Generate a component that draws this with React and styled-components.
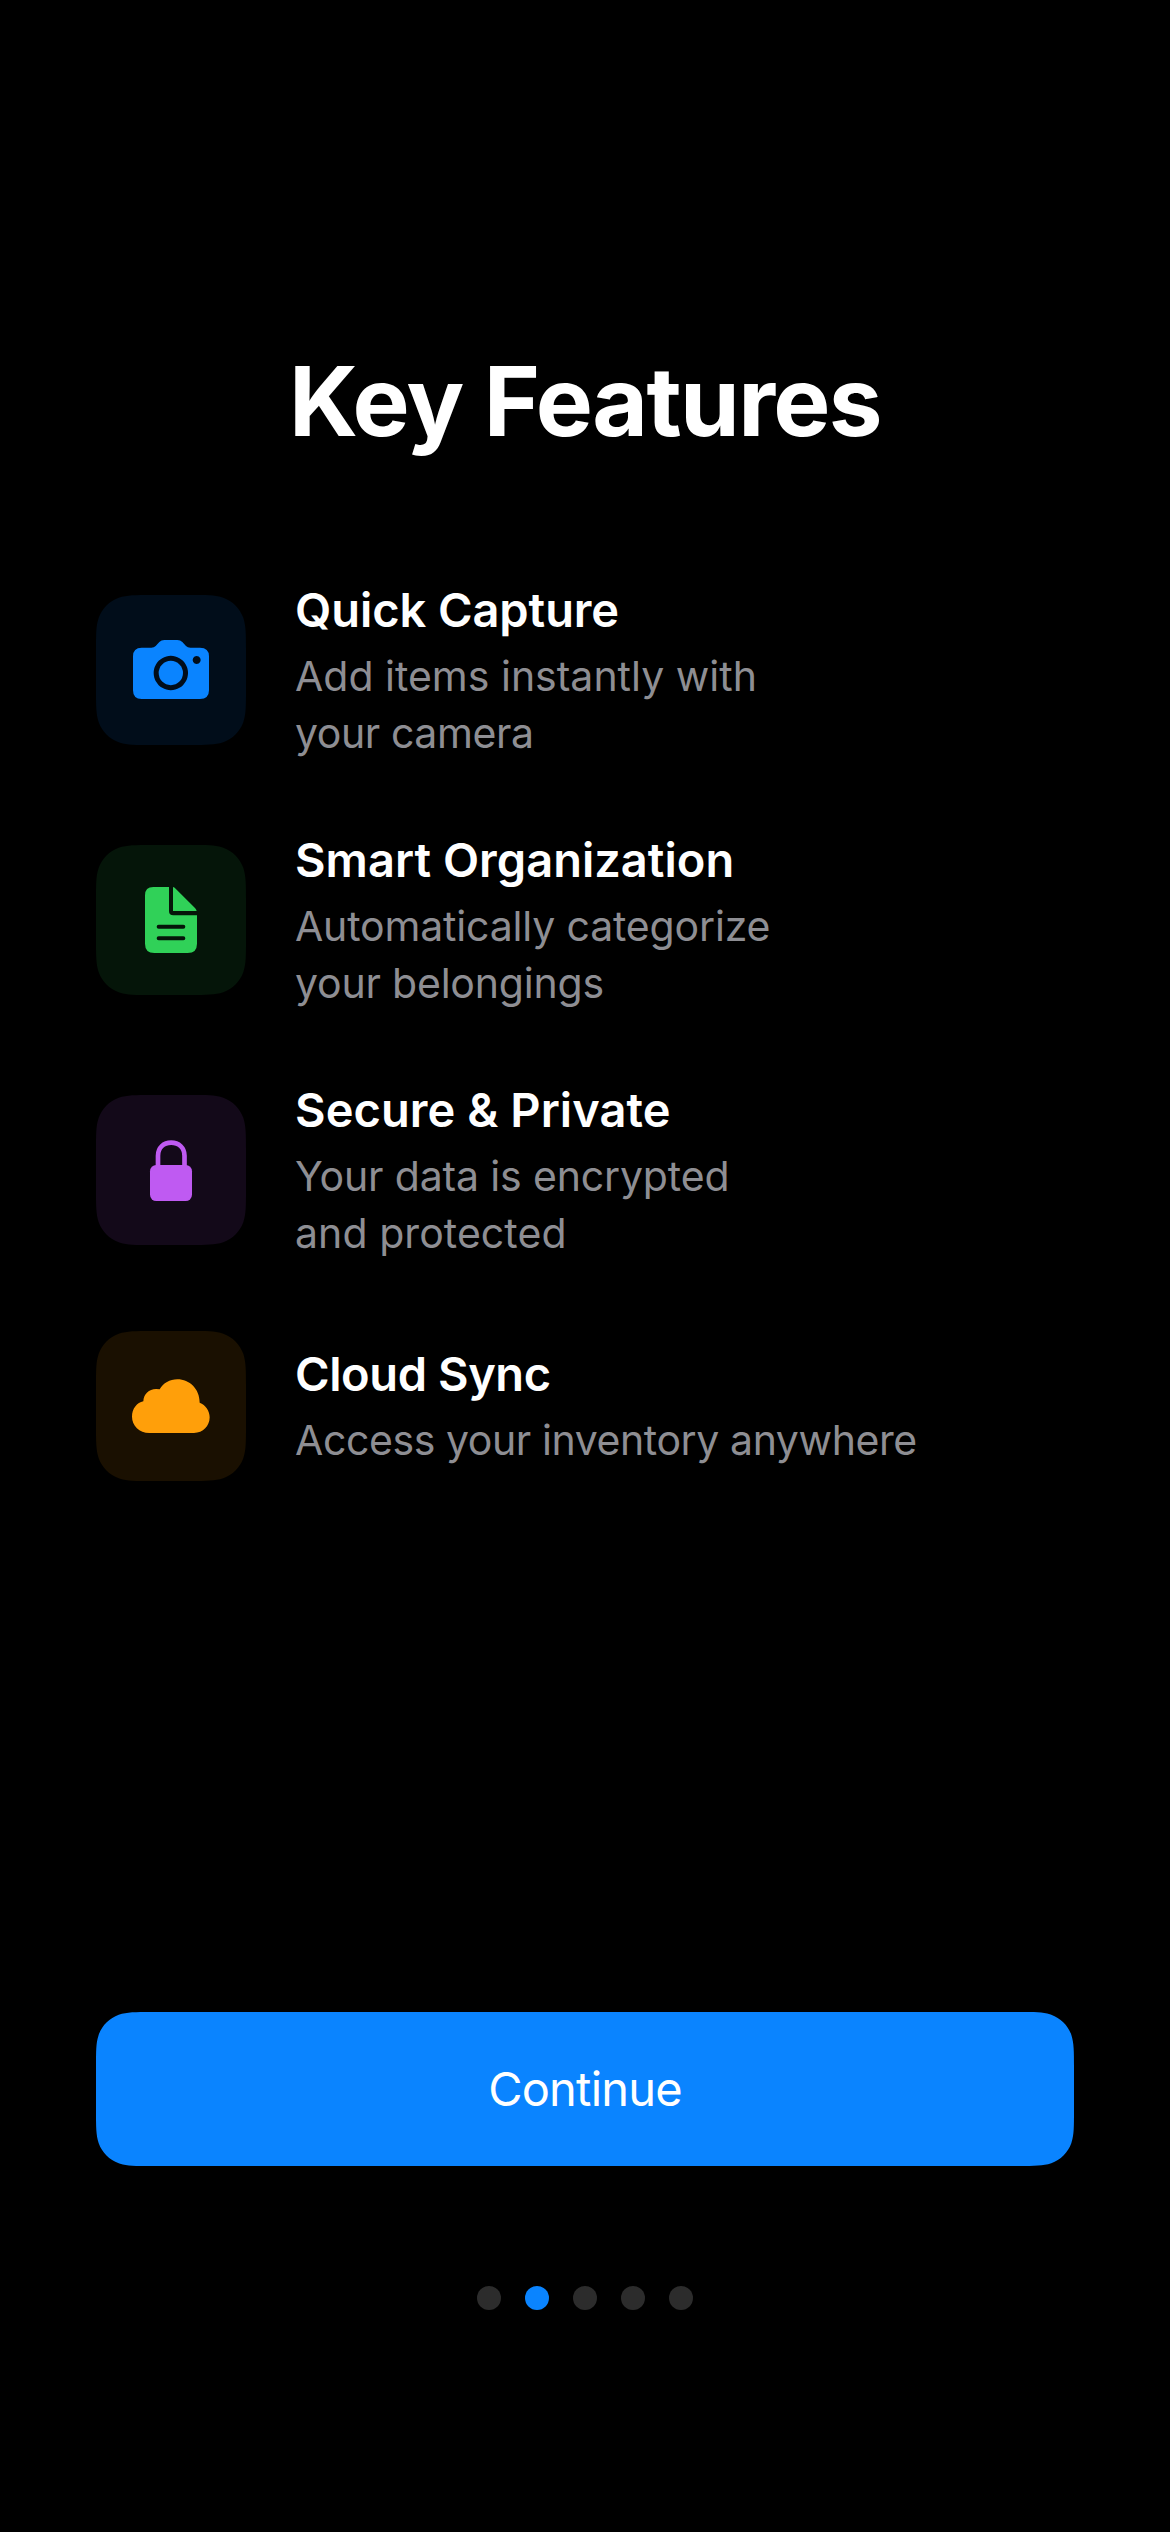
import React from "react";
import styled, { createGlobalStyle } from "styled-components";

const GlobalStyle = createGlobalStyle`
  html, body { margin: 0; background: #000; }
  *, *::before, *::after { box-sizing: border-box; }
`;

// Outline of a rectangle with continuous ("squircle") corners.
const squircle = (w, h, r) => {
  const corner = [
    [1.08849, 0], [0.86841, 0], [0.66993, 0.06549],
    [0.63149, 0.07491],
    [0.37282, 0.16906], [0.16906, 0.37282], [0.07491, 0.63149],
    [0, 0.86841], [0, 1.08849], [0, 1.52866],
  ];
  const draw = (map, flip) => {
    const c = flip ? corner.map(([a, b]) => [b, a]) : corner;
    const p = c.map(([a, b]) => map(a * r, b * r).map((n) => n.toFixed(2)).join(" "));
    return `C ${p[0]} ${p[1]} ${p[2]} L ${p[3]} C ${p[4]} ${p[5]} ${p[6]} C ${p[7]} ${p[8]} ${p[9]} `;
  };
  const e = 1.52866 * r;
  return (
    `M ${e} 0 L ${w - e} 0 ` + draw((x, y) => [w - x, y]) +
    `L ${w} ${h - e} ` + draw((x, y) => [w - x, h - y], true) +
    `L ${e} ${h} ` + draw((x, y) => [x, h - y]) +
    `L 0 ${e} ` + draw((x, y) => [x, y], true) + "Z"
  );
};

const Screen = styled.main`
  display: flex;
  flex-direction: column;
  width: 1170px;
  height: 2532px;
  padding: 341px 96px 222px;
  background: #000;
  color: #fff;
  font-family: Inter, "Liberation Sans", sans-serif;
`;

const Title = styled.h1`
  margin: 0;
  text-align: center;
  font-size: 96px;
  line-height: 120px;
  font-weight: 700;
  letter-spacing: -1.6px;
`;

const FeatureList = styled.ul`
  display: flex;
  flex-direction: column;
  gap: 72px;
  margin: 120px 0 0;
  padding: 0;
  list-style: none;
`;

const FeatureRow = styled.li`
  display: flex;
  align-items: center;
  gap: 49px;
`;

const Tile = styled.div`
  flex: none;
  width: 150px;
  height: 150px;
  color: ${(p) => p.$tint};
  background: ${(p) => p.$tint}1a;
  clip-path: path("${squircle(150, 150, 36)}");

  svg { display: block; width: 150px; height: 150px; }
`;

const FeatureText = styled.div`
  display: flex;
  flex-direction: column;
  gap: 10px;
  margin: -0.25px 0 -2.75px;
`;

const FeatureName = styled.h2`
  margin: 0;
  font-size: 47px;
  line-height: 57px;
  font-weight: 600;
  letter-spacing: ${(p) => p.$tracking}px;
`;

const FeatureDetail = styled.p`
  margin: 0;
  color: #8e8e93;
  font-size: 41px;
  line-height: 57px;
  font-weight: 400;
`;

const DetailLine = styled.span`
  display: block;
  letter-spacing: ${(p) => p.$tracking}px;
`;

const ContinueButton = styled.button`
  height: 154px;
  margin-top: auto;
  padding: 0 0 1px;
  border: 0;
  color: #fff;
  background: #0a84ff;
  font: 400 47px/57px Inter, "Liberation Sans", sans-serif;
  letter-spacing: -0.8px;
  clip-path: path("${squircle(978, 154, 36)}");
`;

const PageDots = styled.div`
  display: flex;
  justify-content: center;
  gap: 24px;
  margin-top: 120px;
`;

const Dot = styled.span`
  width: 24px;
  height: 24px;
  border-radius: 50%;
  background: ${(p) => (p.$active ? "#0a84ff" : "#2c2c2c")};
`;

const CameraIcon = () => (
  <svg viewBox="18 30 450 450" fill="currentColor">
    <path
      fillRule="evenodd"
      d="M129 214Q129 188 155 188H184Q192 188 197 183L208 171Q214 165 223 165H262Q271 165 277 171L288 183Q293 188 301 188H330Q357 188 357 214V316Q357 342 330 342H155Q129 342 129 316ZM242.500 212.500a51.500 51.500 0 1 0 0.010 0ZM320 213a12 12 0 1 0 0.010 0Z"
    />
    <circle cx="242.500" cy="264" r="36.500" />
  </svg>
);

const DocumentIcon = () => (
  <svg viewBox="18 30 450 450" fill="currentColor">
    <path
      fillRule="evenodd"
      d="M190 156H237V228Q237 241 250 241H321V326Q321 354 293 354H193Q165 354 165 326V181Q165 156 190 156ZM206 269a6 6 0 0 0 0 12H280a6 6 0 0 0 0-12ZM206 304a6 6 0 0 0 0 12H280a6 6 0 0 0 0-12Z"
    />
    <path d="M249 156Q253 157 257 161L315 219Q319 223 320 228H249Z" />
  </svg>
);

const LockIcon = () => (
  <svg viewBox="18 30 450 450" fill="currentColor">
    <rect x="180" y="240" width="126" height="108" rx="19" />
    <path d="M204 244V212C204 188 221 173 243.500 173S283.500 188 283.500 212V244" fill="none" stroke="currentColor" strokeWidth="14" />
  </svg>
);

const CloudIcon = () => (
  <svg viewBox="18 33 450 450" fill="currentColor">
    <path d="M178 339C148 339 126 317 126 290C126 266 141 248 160 244C161 222 177 207 198 207Q204 207 209 208C220 189 239 178 262 178C299 178 329 207 329 248C347 255 359 272 359 292C359 318 339 339 312 339Z" />
  </svg>
);

const features = [
  {
    name: "Quick Capture", tracking: -0.08, tint: "#0a84ff", Icon: CameraIcon,
    lines: [["Add items instantly with", 0], ["your camera", -0.42]],
  },
  {
    name: "Smart Organization", tracking: 0.02, tint: "#30d158", Icon: DocumentIcon,
    lines: [["Automatically categorize", -0.17], ["your belongings", -0.2]],
  },
  {
    name: "Secure & Private", tracking: 0.06, tint: "#bf5af2", Icon: LockIcon,
    lines: [["Your data is encrypted", -0.15], ["and protected", 0.07]],
  },
  {
    name: "Cloud Sync", tracking: -0.42, tint: "#ff9f0a", Icon: CloudIcon,
    lines: [["Access your inventory anywhere", -0.41]],
  },
];

export default function App() {
  return (
    <>
      <GlobalStyle />
      <Screen>
        <Title>Key Features</Title>
        <FeatureList>
          {features.map(({ name, tracking, lines, tint, Icon }) => (
            <FeatureRow key={name}>
              <Tile $tint={tint}><Icon /></Tile>
              <FeatureText>
                <FeatureName $tracking={tracking}>{name}</FeatureName>
                <FeatureDetail>
                  {lines.map(([text, spacing]) => (
                    <DetailLine key={text} $tracking={spacing}>{text}</DetailLine>
                  ))}
                </FeatureDetail>
              </FeatureText>
            </FeatureRow>
          ))}
        </FeatureList>
        <ContinueButton type="button">Continue</ContinueButton>
        <PageDots>
          {[0, 1, 2, 3, 4].map((i) => <Dot key={i} $active={i === 1} />)}
        </PageDots>
      </Screen>
    </>
  );
}
